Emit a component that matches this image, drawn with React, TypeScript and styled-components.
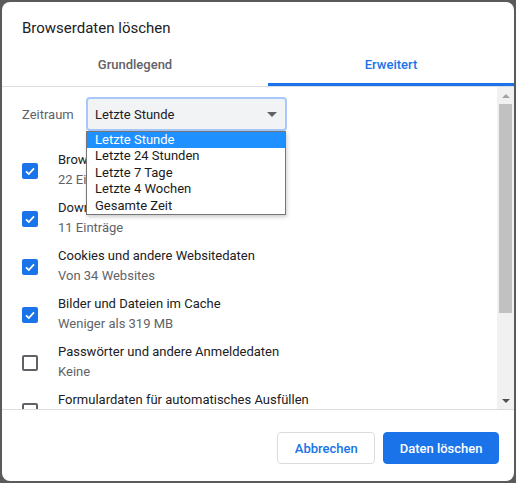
import React from "react";
import styled, { createGlobalStyle } from "styled-components";

const Global = createGlobalStyle`
  html, body { margin: 0; padding: 0; }
  body {
    background: #5a5a5a;
    font-family: Roboto, "Noto Sans", Arial, sans-serif;
    width: 516px;
    height: 483px;
    overflow: hidden;
  }
`;

const Page = styled.div`
  padding: 2px 2px 2px 2px;
  height: 483px;
  box-sizing: border-box;
`;

const Dialog = styled.div`
  width: 512px;
  height: 479px;
  background: #fff;
  border-radius: 8px;
  display: flex;
  flex-direction: column;
  overflow: hidden;
`;

const Title = styled.h1`
  margin: 0;
  padding: 16px 20px 0 20px;
  height: 26px;
  font-size: 15px;
  line-height: 20px;
  font-weight: 400;
  color: #202124;
`;

const Tabs = styled.div`
  display: grid;
  grid-template-columns: 266px 1fr;
  height: 42px;
  border-bottom: 1px solid #dadce0;
`;

const Tab = styled.div<{ $active?: boolean }>`
  display: flex;
  align-items: center;
  justify-content: center;
  font-size: 13px;
  font-weight: 500;
  color: ${(p) => (p.$active ? "#1a73e8" : "#5f6368")};
  box-shadow: ${(p) => (p.$active ? "inset 0 -3px 0 #1a73e8" : "none")};
  padding-bottom: 2px;
  box-sizing: border-box;
`;

const Body = styled.div`
  display: flex;
  height: 322px;
  border-bottom: 1px solid #dadce0;
`;

const Content = styled.div`
  flex: 1;
  overflow: hidden;
`;

const RangeRow = styled.div`
  display: flex;
  align-items: center;
  padding: 10px 0 0 20px;
  gap: 14px;
`;

const RangeLabel = styled.span`
  font-size: 13px;
  color: #5f6368;
  width: 50px;
`;

const SelectWrap = styled.div`
  position: relative;
  width: 201px;
`;

const SelectBox = styled.div`
  height: 34px;
  box-sizing: border-box;
  border: 2px solid #a8c7fa;
  border-radius: 4px;
  background: #f1f3f4;
  display: flex;
  align-items: center;
  justify-content: space-between;
  padding: 0 8px 0 7px;
  font-size: 13px;
  color: #202124;
`;

const Caret = styled.span`
  width: 0;
  height: 0;
  border-left: 5px solid transparent;
  border-right: 5px solid transparent;
  border-top: 5px solid #5f6368;
`;

const Options = styled.ul`
  position: absolute;
  top: 34px;
  left: 0;
  width: 200px;
  margin: 0;
  padding: 0;
  list-style: none;
  background: #fff;
  border: 1px solid #767676;
  box-sizing: border-box;
  box-shadow: 1px 2px 4px rgba(0, 0, 0, 0.2);
  z-index: 5;
`;

const Option = styled.li<{ $selected?: boolean }>`
  height: 16.4px;
  line-height: 16px;
  padding-left: 8px;
  font-size: 13px;
  color: ${(p) => (p.$selected ? "#fff" : "#1b1b1b")};
  background: ${(p) => (p.$selected ? "#1e90ff" : "transparent")};
`;

const List = styled.div`
  padding-top: 16px;
`;

const Item = styled.div`
  display: flex;
  align-items: center;
  height: 48px;
  padding-left: 20px;
  gap: 20px;
`;

const Box = styled.span<{ $checked?: boolean }>`
  width: 16px;
  height: 16px;
  box-sizing: border-box;
  border-radius: 2px;
  flex: none;
  display: flex;
  align-items: center;
  justify-content: center;
  background: ${(p) => (p.$checked ? "#1a73e8" : "#fff")};
  border: ${(p) => (p.$checked ? "none" : "2px solid #5f6368")};
`;

const Texts = styled.div`
  display: flex;
  flex-direction: column;
  margin-top: -2px;
`;

const ItemTitle = styled.span`
  font-size: 13px;
  line-height: 20px;
  color: #202124;
  white-space: nowrap;
`;

const ItemSub = styled.span`
  font-size: 13px;
  line-height: 20px;
  color: #5f6368;
  white-space: nowrap;
`;

const Scrollbar = styled.div`
  width: 17px;
  background: #f1f1f1;
  display: flex;
  flex-direction: column;
  align-items: center;
`;

const Arrow = styled.span<{ $down?: boolean }>`
  height: 17px;
  width: 17px;
  display: flex;
  align-items: center;
  justify-content: center;
  &::after {
    content: "";
    width: 0;
    height: 0;
    border-left: 4px solid transparent;
    border-right: 4px solid transparent;
    ${(p) =>
      p.$down
        ? "border-top: 4px solid #505050;"
        : "border-bottom: 4px solid #a3a3a3;"}
  }
`;

const Thumb = styled.div`
  width: 13px;
  height: 209px;
  background: #c1c1c1;
`;

const Spacer = styled.div`
  flex: 1;
`;

const Footer = styled.div`
  flex: 1;
  display: flex;
  justify-content: flex-end;
  align-items: flex-start;
  padding: 22px 15px 0 0;
  gap: 8px;
`;

const Button = styled.button<{ $primary?: boolean }>`
  height: 32px;
  box-sizing: border-box;
  border-radius: 4px;
  font-family: inherit;
  font-size: 13px;
  font-weight: 500;
  padding: 0 ${(p) => (p.$primary ? "15.5px" : "16.5px")};
  cursor: pointer;
  color: ${(p) => (p.$primary ? "#fff" : "#1a73e8")};
  background: ${(p) => (p.$primary ? "#1a73e8" : "#fff")};
  border: 1px solid ${(p) => (p.$primary ? "#1a73e8" : "#dadce0")};
`;

const Check = () => (
  <svg width="12" height="12" viewBox="0 0 12 12">
    <path d="M2 6.3 L4.8 9 L10 3.4" fill="none" stroke="#fff" strokeWidth="1.8" />
  </svg>
);

const items = [
  { title: "Browserverlauf", sub: "22 Einträge", checked: true },
  { title: "Downloadverlauf", sub: "11 Einträge", checked: true },
  { title: "Cookies und andere Websitedaten", sub: "Von 34 Websites", checked: true },
  { title: "Bilder und Dateien im Cache", sub: "Weniger als 319 MB", checked: true },
  { title: "Passwörter und andere Anmeldedaten", sub: "Keine", checked: false },
  { title: "Formulardaten für automatisches Ausfüllen", sub: "Keine", checked: false },
];

const options = ["Letzte Stunde", "Letzte 24 Stunden", "Letzte 7 Tage", "Letzte 4 Wochen", "Gesamte Zeit"];

export default function App() {
  return (
    <Page>
      <Global />
      <Dialog>
        <Title>Browserdaten löschen</Title>
        <Tabs>
          <Tab>Grundlegend</Tab>
          <Tab $active>Erweitert</Tab>
        </Tabs>
        <Body>
          <Content>
            <RangeRow>
              <RangeLabel>Zeitraum</RangeLabel>
              <SelectWrap>
                <SelectBox>
                  <span>Letzte Stunde</span>
                  <Caret />
                </SelectBox>
                <Options>
                  {options.map((o, i) => (
                    <Option key={o} $selected={i === 0}>
                      {o}
                    </Option>
                  ))}
                </Options>
              </SelectWrap>
            </RangeRow>
            <List>
              {items.map((it) => (
                <Item key={it.title}>
                  <Box $checked={it.checked}>{it.checked && <Check />}</Box>
                  <Texts>
                    <ItemTitle>{it.title}</ItemTitle>
                    <ItemSub>{it.sub}</ItemSub>
                  </Texts>
                </Item>
              ))}
            </List>
          </Content>
          <Scrollbar>
            <Arrow />
            <Thumb />
            <Spacer />
            <Arrow $down />
          </Scrollbar>
        </Body>
        <Footer>
          <Button>Abbrechen</Button>
          <Button $primary>Daten löschen</Button>
        </Footer>
      </Dialog>
    </Page>
  );
}
